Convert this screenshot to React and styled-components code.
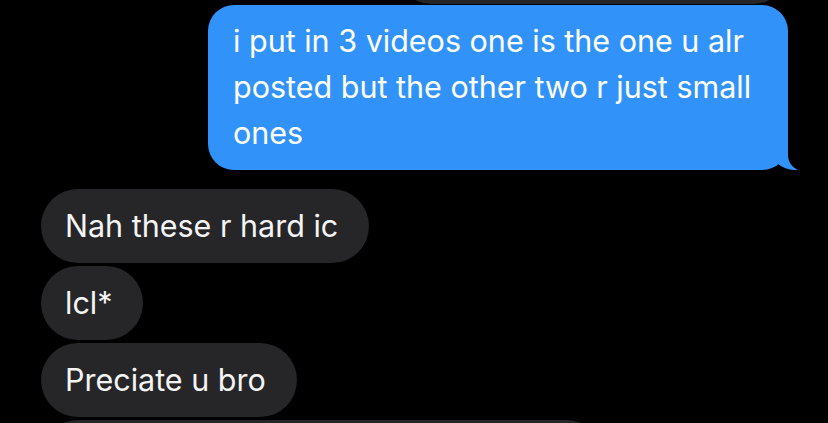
import styled, { createGlobalStyle } from 'styled-components';

const GlobalStyle = createGlobalStyle`
    html, body {
        margin: 0;
        padding: 0;
        background: #000;
        height: 423px;
        overflow: hidden;
    }
    body {
        font-family: "Inter", "Noto Sans", sans-serif;
        -webkit-font-smoothing: antialiased;
    }
`;

const messages = [
    { id: 1, text: 'Nah these r hard ic' },
    { id: 2, text: 'lcl*' },
    { id: 3, text: 'Preciate u bro' },
];

function Tail() {
    return (
        <TailSvg width="30" height="30" viewBox="0 0 30 30">
            <path d="M20 0 L20 15 C20 22 24 27 30 30 C23 30.5 16 28.5 10 24 L0 24 L0 0 Z" fill="#3193FA" />
        </TailSvg>
    );
}

function App() {
    return (
        <>
            <GlobalStyle />
            <Thread>
                <PrevBubble />
                <SentBubble>
                    i put in 3 videos one is the one u alr posted but the other two r just small ones
                    <Tail />
                </SentBubble>
                <ReceivedGroup>
                    {messages.map((m) => (
                        <ReceivedBubble key={m.id}>{m.text}</ReceivedBubble>
                    ))}
                    <NextBubble />
                </ReceivedGroup>
            </Thread>
        </>
    );
}

const Thread = styled.div`
    display: flex;
    flex-direction: column;
    width: 828px;
    height: 423px;
    overflow: hidden;
`;

const PrevBubble = styled.div`
    align-self: flex-start;
    margin-left: 395px;
    margin-top: -70px;
    width: 395px;
    height: 74px;
    border-radius: 37px;
    background: #262629;
    flex-shrink: 0;
`;

const SentBubble = styled.div`
    position: relative;
    align-self: flex-end;
    margin-right: 40px;
    margin-top: 1px;
    width: 580px;
    box-sizing: border-box;
    padding: 13px 25px 14px 25px;
    background: #3193FA;
    color: #fff;
    border-radius: 26px;
    font-size: 30.5px;
    line-height: 46px;
`;

const TailSvg = styled.svg`
    position: absolute;
    right: -10px;
    bottom: 0;
    display: block;
`;

const ReceivedGroup = styled.div`
    display: flex;
    flex-direction: column;
    align-items: flex-start;
    gap: 3px;
    margin-top: 19px;
    padding-left: 41px;
`;

const ReceivedBubble = styled.div`
    padding: 14px 31px 14px 24px;
    background: #262629;
    color: #f4f4f4;
    border-radius: 37px;
    font-size: 30.5px;
    line-height: 46px;
    white-space: nowrap;
`;

const NextBubble = styled.div`
    width: 562px;
    height: 74px;
    border-radius: 37px;
    background: #262629;
    flex-shrink: 0;
`;

export default App;
